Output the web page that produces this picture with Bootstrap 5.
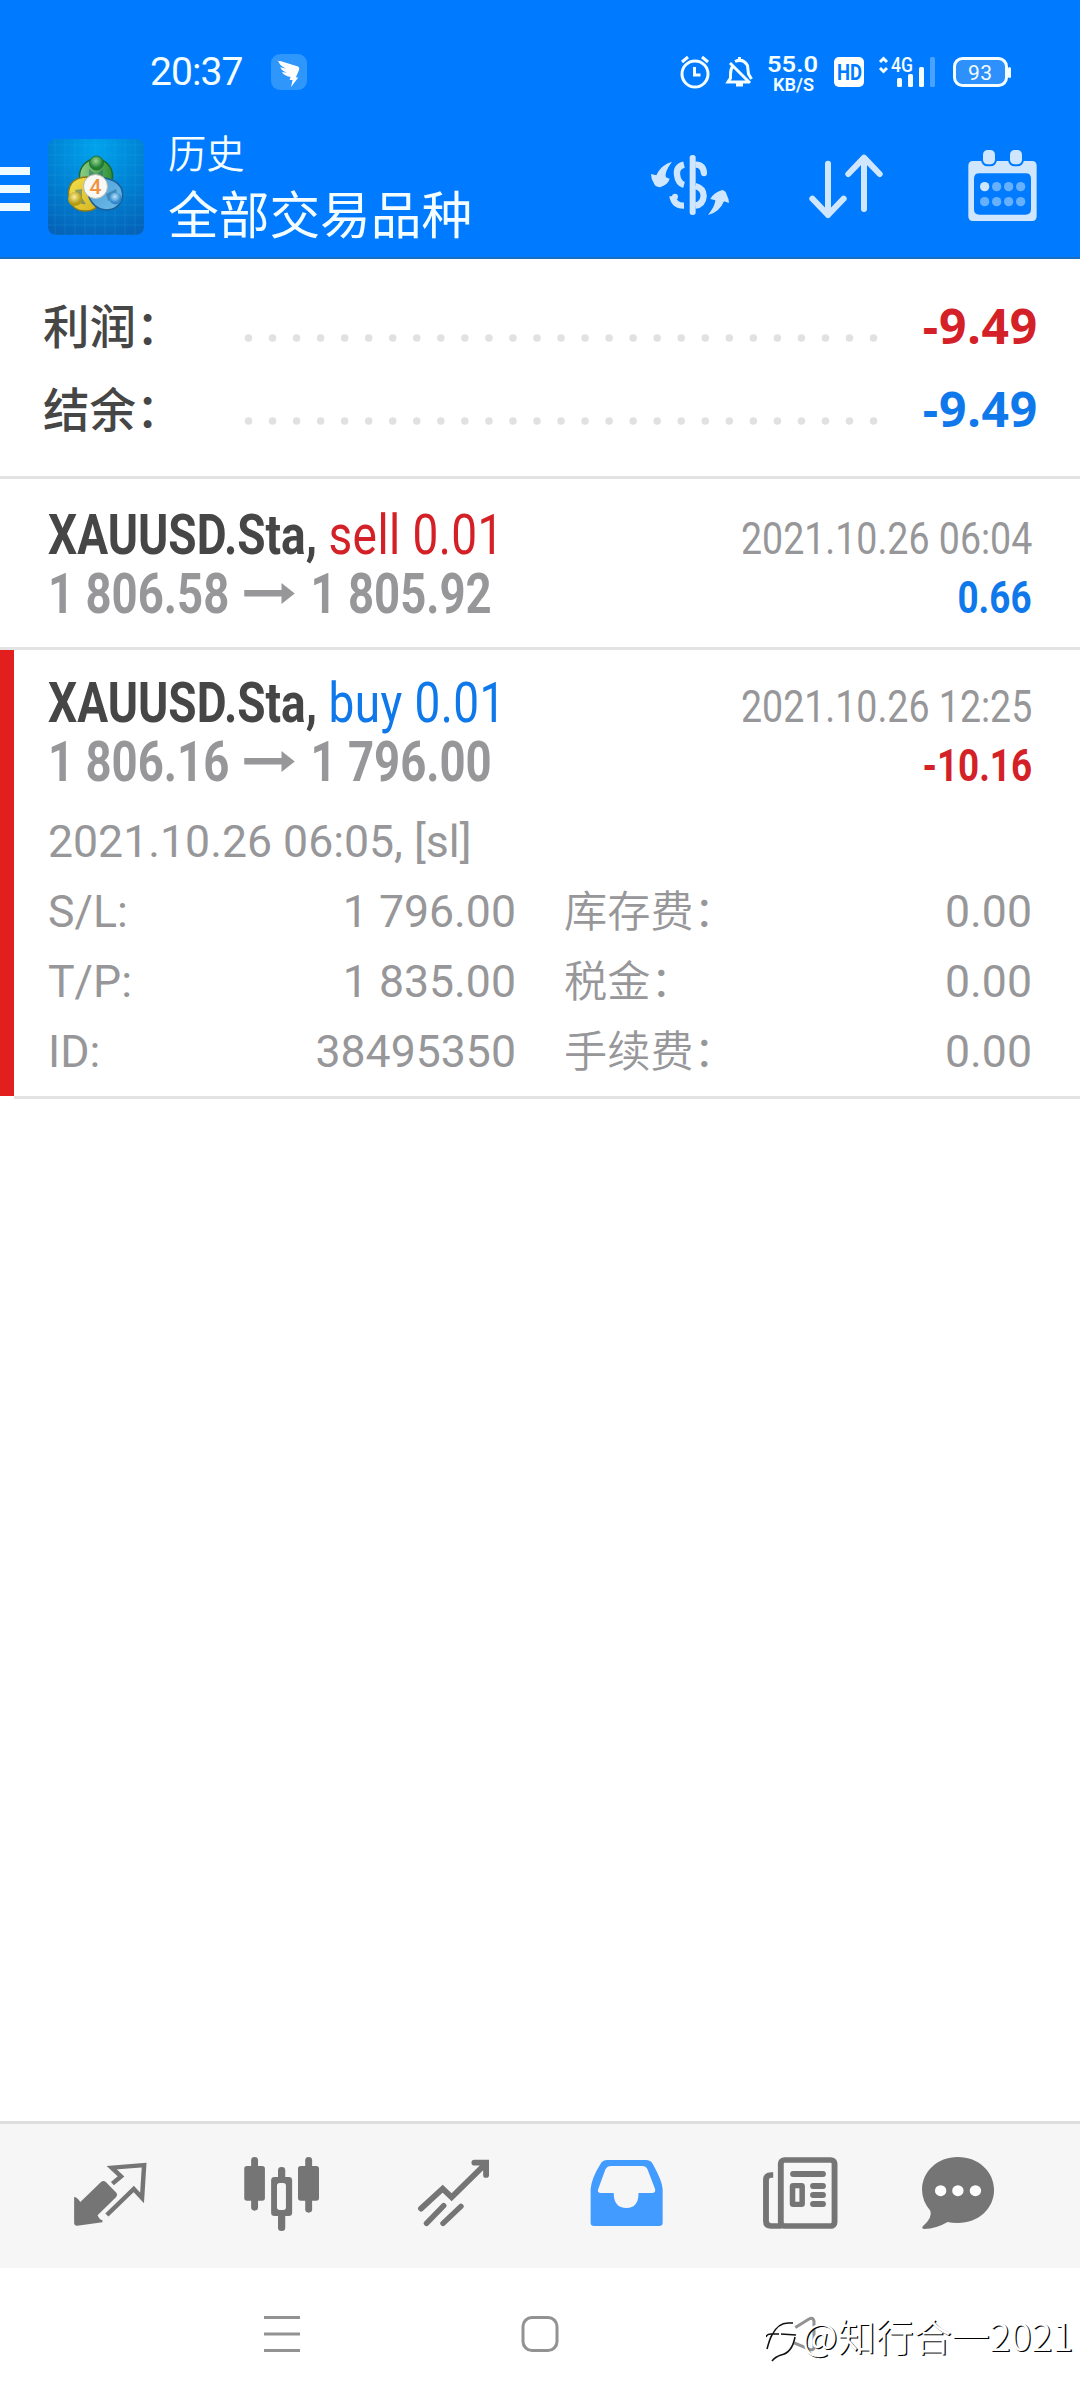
<!DOCTYPE html>
<html lang="zh-CN">
<head>
<meta charset="utf-8">
<meta name="viewport" content="width=device-width, initial-scale=1">
<title>历史</title>
<link rel="stylesheet" href="https://cdn.jsdelivr.net/npm/bootstrap@5.3.0/dist/css/bootstrap.min.css">
<style>
body{font-family:Roboto,"Noto Sans CJK SC",sans-serif;color:#464646;background:#fff}
svg{display:block;flex:none}
.screen{width:1080px;height:2400px;overflow:hidden;position:relative}
.topbar{height:259px;background:#007bff;border-bottom:2px solid #1a6fc0;color:#f4fdff}
.statusbar{height:110px}
.toolbar-row{height:147px}
.clock{font-size:39px;line-height:50px;padding-left:150px;padding-top:47px;width:271px;letter-spacing:-.9px}
.page-sub{font-size:38.3px;line-height:50px;font-weight:350}
.page-main{font-size:50.7px;line-height:56px;font-weight:400;margin-top:9px}
.titles{padding:20px 0 0 24px}
.summary{height:220px;padding:25px 43px 0 43px;border-bottom:3px solid #e3e3e3;font-family:"Noto Sans","Noto Sans CJK SC",sans-serif;font-size:48px;line-height:83px}
.sum-label{width:200px;font-weight:500;font-size:46.5px;padding-top:1px}
.sum-row{height:83px}
.sum-value{font-weight:700;letter-spacing:.8px;margin-right:-1px}
.c-red{color:#d32127}.c-blue{color:#0f78ea}.c-gray{color:#97979a}
.deal{border-bottom:3px solid #e3e3e3;padding:27px 48px 0 48px}
.deal-short{height:171px}
.deal-open{height:449px;padding-top:24px;padding-left:34px}
.mark-loss{width:14px;height:446px;background:#e31e1e}
.deal-line{height:59px;line-height:59px;font-size:55px;white-space:nowrap}
.squeeze{transform:scaleX(.836);transform-origin:left}
.squeeze span{letter-spacing:.5px}
.squeeze-price{transform:scaleX(.828);transform-origin:left}
.squeeze-end{transform:scaleX(.834);transform-origin:right;font-size:45px}
.squeeze-end.fw-bold{transform:scaleX(.818)}
.price-arrow{margin:0 17px}
.details{margin-top:15px;font-size:44.6px;font-weight:400}
.details .drow{height:70px;line-height:70px}
.col-l{width:468px}
.col-r{width:468px}
.cjk-thin{font-weight:350;font-size:43.2px;padding-top:1px}
.tabs{height:147px;margin-top:1022px;border-top:3px solid #dedede;background:#f6f6f6;padding:0 24px}
.sysnav{height:132px}
.stamp{position:absolute;left:766px;top:2305px;color:#fff;font-family:"Noto Sans CJK SC",sans-serif;font-weight:350;font-size:38px;line-height:60px;text-shadow:1.3px 1.3px 0 #000;white-space:nowrap}
</style>
</head>
<body>
<div class="screen d-flex flex-column">
  <header class="topbar flex-shrink-0">
    <div class="statusbar d-flex">
      <div class="clock">20:37</div>
      <svg width="36" height="110" viewBox="271 0 36 110"><rect x="271" y="54" width="36" height="36" rx="9" fill="#2f96fb"/><path d="M277 60l21 6.500q2 1 .8 4l-3 7h2.500l-7.300 9.500 1.600-7h-3l1-3q-7-1.500-8.600-5l5 .7q-6-2.500-6.600-5.500l6 1.500q-8-3.500-8.400-8.700z" fill="#fff"/></svg>
      <svg class="ms-auto" width="440" height="110" viewBox="640 0 440 110" fill="none" stroke="#f4fdff" stroke-width="3">
        <circle cx="695" cy="74" r="13"/><path d="M694.500 67v8h6M682 62l6-5M708 62l-6-5"/>
        <path d="M733 66q-2.500 3-2.500 8v4l-2.500 4h20M735 61.500q8-3.500 12.500 4l1 8.500 3 5M730 63l20 20M739.500 57v3M736 85h7"/>
        <rect x="834" y="57" width="30" height="30" rx="5" fill="#fff" stroke="none"/>
        <path d="M880 62l3.500-3.500 3.500 3.500M880 68l3.500 3.500 3.500-3.500"/>
        <g fill="#f4fdff" stroke="none"><rect x="897" y="78" width="5" height="9" rx="1.500"/><rect x="908" y="74" width="5" height="13" rx="1.500"/><rect x="919" y="67" width="5" height="20" rx="1.500"/><rect x="930" y="57" width="5" height="30" rx="1.500" opacity=".3"/><rect x="1008" y="67" width="3" height="11" rx="1.500"/></g>
        <rect x="954.500" y="58.500" width="52" height="27" rx="8" fill="#2d90fb"/>
        <g font-family="Roboto" fill="#f4fdff" stroke="none">
          <text x="767" y="71.500" font-size="22.500" font-weight="600" textLength="51" lengthAdjust="spacingAndGlyphs">55.0</text>
          <text x="773" y="91" font-size="18" font-weight="600" textLength="41" lengthAdjust="spacingAndGlyphs">KB/S</text>
          <text x="837" y="80" font-size="22" font-weight="700" fill="#007bff" textLength="25" lengthAdjust="spacingAndGlyphs">HD</text>
          <text x="891" y="71.500" font-size="19.500" font-weight="500" textLength="22" lengthAdjust="spacingAndGlyphs">4G</text>
          <text x="968" y="79.500" font-size="21" font-weight="400" textLength="24">93</text>
        </g>
      </svg>
    </div>
    <div class="toolbar-row d-flex">
      <svg width="48" height="146" viewBox="0 110 48 146" fill="#f0fbff"><path d="M0 167h30v8H0zM0 185h30v8H0zM0 203h30v8H0z"/></svg>
      <svg width="96" height="146" viewBox="48 110 96 146">
        <defs>
          <radialGradient id="bgApp" cx=".5" cy=".1" r=".95"><stop offset="0" stop-color="#00a3ee"/><stop offset=".55" stop-color="#0180d2"/><stop offset="1" stop-color="#0563b8"/></radialGradient>
          <pattern id="gridApp" width="10" height="10" patternUnits="userSpaceOnUse"><path d="M5 0v10M0 5h10" stroke="#35b8ef" stroke-opacity=".16"/></pattern>
          <radialGradient id="gG" cx=".45" cy=".35"><stop offset="0" stop-color="#9ad98f"/><stop offset="1" stop-color="#1f7f35"/></radialGradient>
          <radialGradient id="gY" cx=".45" cy=".35"><stop offset="0" stop-color="#fbf09a"/><stop offset="1" stop-color="#b79a12"/></radialGradient>
          <radialGradient id="gB" cx=".45" cy=".35"><stop offset="0" stop-color="#b9e4fb"/><stop offset="1" stop-color="#2f86cc"/></radialGradient>
          <linearGradient id="rG" x1="0" x2="1"><stop offset="0" stop-color="#8fcf87"/><stop offset="1" stop-color="#2f8f35"/></linearGradient>
          <linearGradient id="rY" y2="1"><stop offset="0" stop-color="#f3e24e"/><stop offset="1" stop-color="#d5b320"/></linearGradient>
          <linearGradient id="rB" x2="1" y2="1"><stop offset="0" stop-color="#4f9fd8"/><stop offset="1" stop-color="#6bbbe8"/></linearGradient>
        </defs>
        <rect x="48" y="139" width="96" height="96" rx="8" fill="url(#bgApp)"/><rect x="48" y="139" width="96" height="96" rx="8" fill="url(#gridApp)"/>
        <g stroke-width="1.500">
          <ellipse cx="96" cy="176" rx="16.500" ry="17" fill="url(#rG)" stroke="#1c6b2a"/>
          <path d="M88 177q-20 0-19.500 18 2 16 17 16 10 0 12-6z" fill="url(#rY)" stroke="#8d7a14"/>
          <path d="M105 178q19 4 17.500 19-3 13-17 13-12-1-17-14z" fill="url(#rB)" stroke="#1c5f98"/>
          <path d="M89 169l7 6 7-6v8H89zM75 190l7-1v9l4 6q-8 1-8-5zM106 194l10-5 2 8-10 4z" fill="#1a5f86" stroke="none" opacity=".45"/>
        </g>
        <circle cx="96.500" cy="163" r="7" fill="url(#gG)" stroke="#1c6b2a" stroke-width=".8"/><circle cx="75" cy="199" r="7" fill="url(#gY)"/><circle cx="115.500" cy="198.500" r="6" fill="url(#gB)"/>
        <circle cx="95.500" cy="186.500" r="12" fill="#f8f8f6" stroke="#b9b9b0"/>
        <text x="95.500" y="194" text-anchor="middle" font-family="Roboto" font-size="21" font-weight="500" fill="#f0923f">4</text>
      </svg>
      <div class="titles"><div class="page-sub">历史</div><div class="page-main">全部交易品种</div></div>
      <svg class="ms-auto" width="440" height="146" viewBox="640 110 440 146">
        <g transform="translate(640 30) scale(.33333)" fill="#cfe6fd">
          <path d="M96 395q-24 32-18 47l11 4q-5 18-29 26-16-2-19-14-8-12-8-26l16 4q14-32 47-41zM204 555q22-28 22-44l-15-4q10-20 36-27 12 4 13 14 7 12 7 25l-15-5q-14 34-48 41z"/>
          <rect x="149" y="375" width="18" height="180" rx="8"/>
          <path d="M132 404q-24 6-21 30 3 26 21 31M97 498q6 30 35 29M166 404q24-1 26 26M166 468q25 7 25 30-2 26-25 29" fill="none" stroke="#cfe6fd" stroke-width="19"/><circle cx="192" cy="430" r="9"/><circle cx="105" cy="500" r="9"/>
          <g fill="none" stroke="#cfe6fd" stroke-width="18" stroke-linecap="round" stroke-linejoin="round"><path d="M564 401v154M517 506l47 49 47-49M672 537V383M625 432l47-49 47 49"/></g>
          <path fill-rule="evenodd" d="M999 393h177q14 0 14 14v152q0 14-14 14H999q-14 0-14-14V407q0-14 14-14zM1018 430q-16 0-16 16v92q0 16 16 16h139q16 0 16-16v-92q0-16-16-16z"/>
          <rect x="1026" y="357" width="42" height="49" rx="17" stroke="#007bff" stroke-width="6"/><rect x="1107" y="357" width="42" height="49" rx="17" stroke="#007bff" stroke-width="6"/>
          <circle cx="1034" cy="470" r="14"/><g fill="#66b0fd"><circle cx="1070" cy="470" r="14"/><circle cx="1106" cy="470" r="14"/><circle cx="1142" cy="470" r="14"/><circle cx="1034" cy="515" r="14"/><circle cx="1070" cy="515" r="14"/><circle cx="1106" cy="515" r="14"/><circle cx="1142" cy="515" r="14"/></g>
        </g>
      </svg>
    </div>
  </header>

  <section class="summary flex-shrink-0">
    <div class="sum-row d-flex">
      <div class="sum-label">利润：</div>
      <svg width="650" height="83" viewBox="243 284 650 83"><path d="M248.500 338H876" stroke="#e1e1e1" stroke-width="7.500" stroke-linecap="round" stroke-dasharray="0 24.040"/></svg>
      <div class="sum-value c-red ms-auto">-9.49</div>
    </div>
    <div class="sum-row d-flex">
      <div class="sum-label">结余：</div>
      <svg width="650" height="83" viewBox="243 284 650 83"><path d="M248.500 338H876" stroke="#e1e1e1" stroke-width="7.500" stroke-linecap="round" stroke-dasharray="0 24.040"/></svg>
      <div class="sum-value c-blue ms-auto">-9.49</div>
    </div>
  </section>

  <article class="deal deal-short flex-shrink-0">
    <div class="deal-line d-flex justify-content-between align-items-baseline">
      <div class="squeeze"><b>XAUUSD.Sta,</b> <span class="c-red">sell 0.01</span></div>
      <div class="squeeze-end c-gray">2021.10.26 06:04</div>
    </div>
    <div class="deal-line d-flex justify-content-between align-items-baseline">
      <div class="squeeze-price c-gray fw-bold d-flex">1 806.58<svg class="price-arrow" width="64" height="59" viewBox="0 0 64 59"><path d="M1 25h45v-7l16 10.500-16 10.500v-7.500H1z" fill="#97979a"/></svg>1 805.92</div>
      <div class="squeeze-end c-blue fw-bold">0.66</div>
    </div>
  </article>

  <article class="d-flex flex-shrink-0">
    <div class="mark-loss flex-shrink-0"></div>
    <div class="deal deal-open flex-grow-1">
      <div class="deal-line d-flex justify-content-between align-items-baseline">
        <div class="squeeze"><b>XAUUSD.Sta,</b> <span class="c-blue">buy 0.01</span></div>
        <div class="squeeze-end c-gray">2021.10.26 12:25</div>
      </div>
      <div class="deal-line d-flex justify-content-between align-items-baseline">
        <div class="squeeze-price c-gray fw-bold d-flex">1 806.16<svg class="price-arrow" width="64" height="59" viewBox="0 0 64 59"><path d="M1 25h45v-7l16 10.500-16 10.500v-7.500H1z" fill="#97979a"/></svg>1 796.00</div>
        <div class="squeeze-end c-red fw-bold">-10.16</div>
      </div>
      <div class="details c-gray">
        <div class="drow">2021.10.26 06:05, [sl]</div>
        <div class="drow d-flex justify-content-between"><div class="col-l d-flex justify-content-between"><span>S/L:</span><span>1 796.00</span></div><div class="col-r d-flex justify-content-between"><span class="cjk-thin">库存费：</span><span>0.00</span></div></div>
        <div class="drow d-flex justify-content-between"><div class="col-l d-flex justify-content-between"><span>T/P:</span><span>1 835.00</span></div><div class="col-r d-flex justify-content-between"><span class="cjk-thin">税金：</span><span>0.00</span></div></div>
        <div class="drow d-flex justify-content-between"><div class="col-l d-flex justify-content-between"><span>ID:</span><span>38495350</span></div><div class="col-r d-flex justify-content-between"><span class="cjk-thin">手续费：</span><span>0.00</span></div></div>
      </div>
    </div>
  </article>

  <nav class="tabs d-flex flex-shrink-0">
    <svg width="172" height="144" viewBox="24 2124 172 144"><g transform="translate(0 2110) scale(.3448 .33333)" fill="#757575">
      <path d="M215 261q8 0 18 15l60-60q7-6 14 0l31 33q4 7-1 12l-54 55q6 15 14 14v7l-73 10q-9 0-9-9z"/>
      <path d="M326 221l25-22-27-26 94-8-6 99-24-27-78 78" fill="none" stroke="#757575" stroke-width="13"/></g></svg>
    <svg width="172" height="144" viewBox="196 2124 172 144"><g transform="translate(0 2110) scale(.3445 .33333)" fill="#757575">
      <rect x="709" y="168" width="60" height="104" rx="8"/><rect x="729" y="141" width="20" height="161" rx="10"/>
      <rect x="865" y="168" width="61" height="104" rx="8"/><rect x="886" y="141" width="20" height="167" rx="10"/>
      <rect x="807" y="171" width="21" height="40" rx="10"/><rect x="807" y="308" width="21" height="55" rx="10"/>
      <path fill-rule="evenodd" d="M797 201h41q10 0 10 10v97q0 10-10 10h-41q-10 0-10-10v-97q0-10 10-10zM812 219q-8 0-8 8v65q0 8 8 8h10q8 0 8-8v-65q0-8-8-8z"/></g></svg>
    <svg width="172" height="144" viewBox="368 2124 172 144"><g transform="translate(0 2110) scale(.3445 .33333)" fill="none" stroke="#757575" stroke-width="16" stroke-linecap="round">
      <path d="M1222 296l63-60 26 26 98-100M1377 158h34v37" stroke-width="17"/><path d="M1238 340l50-53M1286 340l52-51"/></g></svg>
    <svg width="172" height="144" viewBox="540 2124 172 144"><g transform="translate(540 2110) scale(.3445 .33333)">
      <path fill="#429bff" fill-rule="evenodd" d="M195 150h112q14 0 20 11 28 52 29 76v101q0 10-10 10H157q-10 0-10-10V237q2-32 29-76 6-11 19-11zM206 168q-11 0-16 10l-21 59q-4 12 8 12h37q0 45 37 45 35 0 35-45h39q12 0 9-12l-22-59q-4-10-16-10z"/></g></svg>
    <svg width="172" height="144" viewBox="712 2124 172 144"><g transform="translate(540 2110) scale(.3445 .33333)" fill="none" stroke="#757575">
      <rect x="699" y="150" width="156" height="198" rx="11" stroke-width="17"/><path d="M677 195h-6q-15 0-15 15v124q0 14 15 14h30" stroke-width="17"/><path d="M735 192h86M793 228h28M793 255h28M793 282h28" stroke-width="18" stroke-linecap="round"/><rect x="733" y="227" width="28" height="56" rx="2" stroke-width="16"/></g></svg>
    <svg width="172" height="144" viewBox="884 2124 172 144"><g transform="translate(540 2110) scale(.3445 .33333)" fill="#757575">
      <path d="M1213 141c60 0 105 44 105 99s-45 99-105 99q-18 0-30-3-32 20-68 21-9-2-3-9 28-26 21-46-24-29-24-62c0-55 44-99 104-99z"/><g fill="#fff"><circle cx="1163" cy="242" r="16.500"/><circle cx="1213" cy="242" r="16.500"/><circle cx="1264" cy="242" r="16.500"/></g></g></svg>
  </nav>
  <div class="sysnav">
    <svg width="1080" height="132" viewBox="0 2268 1080 132" fill="none" stroke="#929292" stroke-width="3">
      <path d="M264 2317.500h36M264 2334h36M264 2350.500h36"/><rect x="523" y="2317.500" width="34" height="33" rx="9"/><path d="M780 2337l29-18q4-2 5 2v27q-1 3-5 1z"/></svg>
  </div>
  <div class="stamp d-flex">
    <svg width="36" height="60" viewBox="766 2308 36 60" fill="none"><path d="M767 2337q8-14 23-12 8 4 6 15-3 15-20 23l-8-13z" fill="#fff"/><path d="M766 2340q1-3 5-3h8M767 2352q3-11 5-14 6-12 16-12h5M795 2340q-3 16-14 18-6 2-9 6M781 2337l15 1" stroke="#111" stroke-width="1.500"/></svg>
    <span>@知行合一2021</span>
  </div>
</div>
<script src="https://cdn.jsdelivr.net/npm/bootstrap@5.3.0/dist/js/bootstrap.bundle.min.js"></script>
</body>
</html>
